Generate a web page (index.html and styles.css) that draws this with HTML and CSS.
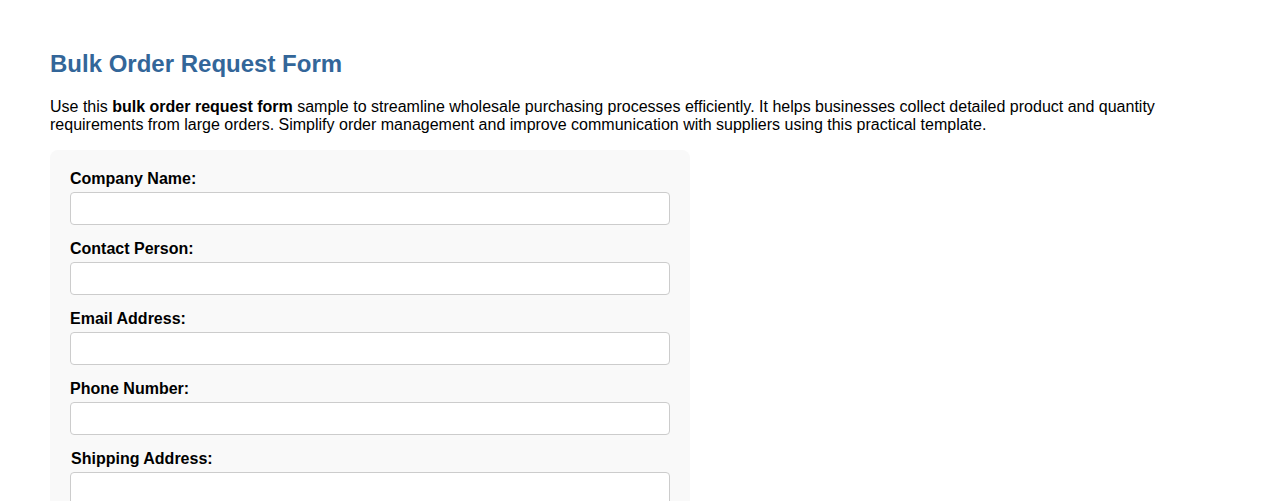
FILE: index.html
```html
<!DOCTYPE html>
<html>
<head>
<meta charset="utf-8">
<link rel="stylesheet" href="styles.css">
</head>
<body>
<div class="page">
  <h1 class="title">Bulk Order Request Form</h1>
  <p class="intro">Use this <strong>bulk order request form</strong> sample to streamline wholesale purchasing processes efficiently. It helps businesses collect detailed product and quantity requirements from large orders. Simplify order management and improve communication with suppliers using this practical template.</p>
  <form class="form-box">
    <div class="field">
      <label class="label">Company Name:</label>
      <input class="input" type="text">
    </div>
    <div class="field">
      <label class="label">Contact Person:</label>
      <input class="input" type="text">
    </div>
    <div class="field">
      <label class="label">Email Address:</label>
      <input class="input" type="email">
    </div>
    <div class="field">
      <label class="label">Phone Number:</label>
      <input class="input" type="tel">
    </div>
    <div class="field">
      <label class="label label-shift">Shipping Address:</label>
      <textarea class="input textarea"></textarea>
    </div>
  </form>
</div>
</body>
</html>
```
FILE: styles.css
```css
html, body {
  margin: 0;
  padding: 0;
  background: #fff;
}
body {
  font-family: "Liberation Sans", Arial, sans-serif;
  color: #000;
}
.page {
  padding: 50px 50px 0 50px;
}
.title {
  margin: 0 0 20px 0;
  font-size: 24px;
  line-height: 28px;
  font-weight: bold;
  color: #336699;
}
.intro {
  margin: 0 0 15px 0;
  font-size: 16px;
  line-height: 18.4px;
}
.form-box {
  width: 600px;
  padding: 20px;
  background: #f9f9f9;
  border-radius: 8px;
}
.field {
  display: flex;
  flex-direction: column;
  margin-bottom: 15px;
}
.label {
  font-size: 16px;
  line-height: 18px;
  font-weight: bold;
  margin-bottom: 4px;
}
.label-shift {
  padding-left: 1px;
}
.input {
  box-sizing: border-box;
  width: 600px;
  height: 33px;
  margin: 0;
  padding: 8px;
  border: 1px solid #cccccc;
  border-radius: 4px;
  background: #fff;
  font-family: "Liberation Sans", Arial, sans-serif;
  font-size: 14px;
}
.textarea {
  height: 80px;
  resize: vertical;
}
```
